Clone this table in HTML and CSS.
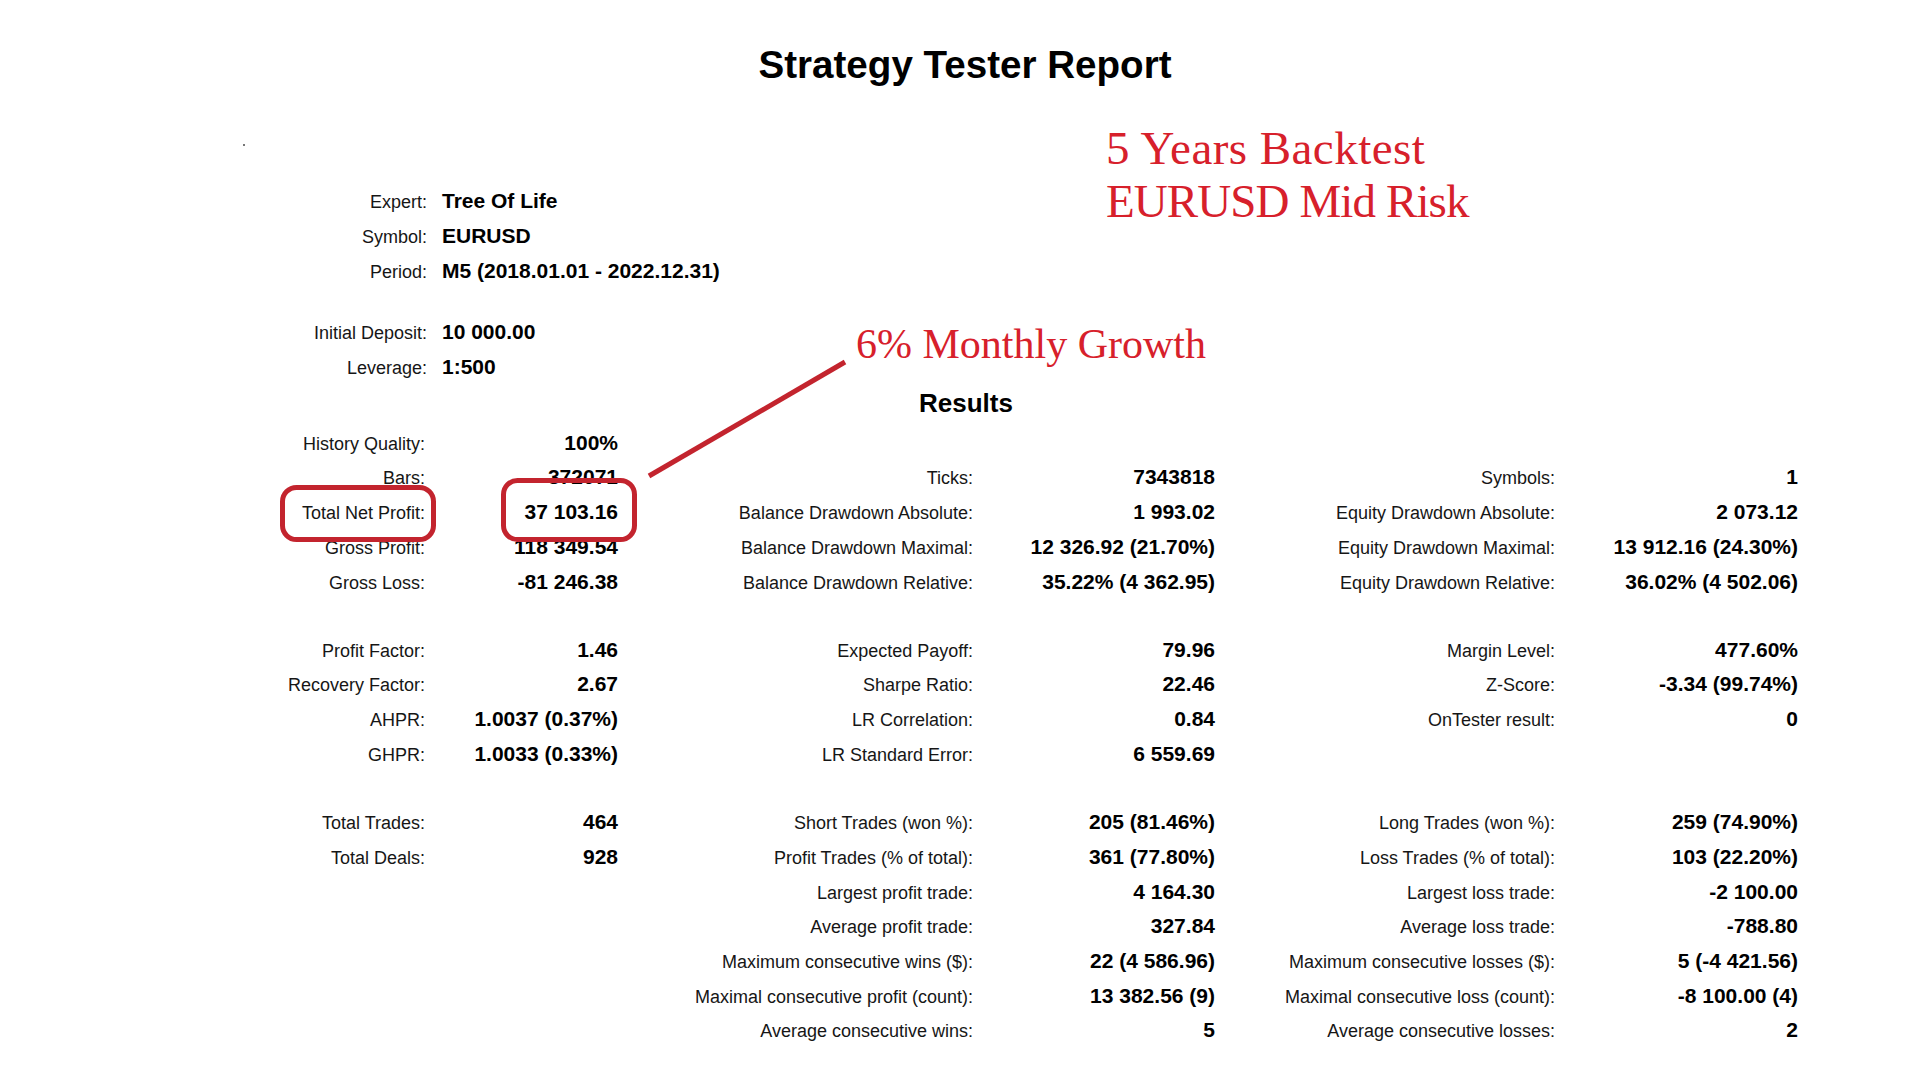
FILE: index.html
```html
<!DOCTYPE html>
<html lang="en">
<head>
<meta charset="utf-8">
<title>Strategy Tester Report</title>
<link rel="stylesheet" href="styles.css">
</head>
<body>
<div class="page">
  <h1 class="title">Strategy Tester Report</h1>

  <div class="info">
    <div class="lbl">Expert:</div><div class="val">Tree Of Life</div>
    <div class="lbl">Symbol:</div><div class="val">EURUSD</div>
    <div class="lbl">Period:</div><div class="val">M5 (2018.01.01 - 2022.12.31)</div>
  </div>
  <div class="info info-second">
    <div class="lbl">Initial Deposit:</div><div class="val">10 000.00</div>
    <div class="lbl">Leverage:</div><div class="val">1:500</div>
  </div>

  <h2 class="results-h">Results</h2>

  <div class="grid g1">
    <div class="lbl">History Quality:</div><div class="val">100%</div><div></div><div></div><div></div><div></div>
    <div class="lbl">Bars:</div><div class="val">372071</div><div class="lbl">Ticks:</div><div class="val">7343818</div><div class="lbl">Symbols:</div><div class="val">1</div>
    <div class="lbl">Total Net Profit:</div><div class="val">37 103.16</div><div class="lbl">Balance Drawdown Absolute:</div><div class="val">1 993.02</div><div class="lbl">Equity Drawdown Absolute:</div><div class="val">2 073.12</div>
    <div class="lbl">Gross Profit:</div><div class="val">118 349.54</div><div class="lbl">Balance Drawdown Maximal:</div><div class="val">12 326.92 (21.70%)</div><div class="lbl">Equity Drawdown Maximal:</div><div class="val">13 912.16 (24.30%)</div>
    <div class="lbl">Gross Loss:</div><div class="val">-81 246.38</div><div class="lbl">Balance Drawdown Relative:</div><div class="val">35.22% (4 362.95)</div><div class="lbl">Equity Drawdown Relative:</div><div class="val">36.02% (4 502.06)</div>
  </div>

  <div class="grid g2">
    <div class="lbl">Profit Factor:</div><div class="val">1.46</div><div class="lbl">Expected Payoff:</div><div class="val">79.96</div><div class="lbl">Margin Level:</div><div class="val">477.60%</div>
    <div class="lbl">Recovery Factor:</div><div class="val">2.67</div><div class="lbl">Sharpe Ratio:</div><div class="val">22.46</div><div class="lbl">Z-Score:</div><div class="val">-3.34 (99.74%)</div>
    <div class="lbl">AHPR:</div><div class="val">1.0037 (0.37%)</div><div class="lbl">LR Correlation:</div><div class="val">0.84</div><div class="lbl">OnTester result:</div><div class="val">0</div>
    <div class="lbl">GHPR:</div><div class="val">1.0033 (0.33%)</div><div class="lbl">LR Standard Error:</div><div class="val">6 559.69</div><div></div><div></div>
  </div>

  <div class="grid g3">
    <div class="lbl">Total Trades:</div><div class="val">464</div><div class="lbl">Short Trades (won %):</div><div class="val">205 (81.46%)</div><div class="lbl">Long Trades (won %):</div><div class="val">259 (74.90%)</div>
    <div class="lbl">Total Deals:</div><div class="val">928</div><div class="lbl">Profit Trades (% of total):</div><div class="val">361 (77.80%)</div><div class="lbl">Loss Trades (% of total):</div><div class="val">103 (22.20%)</div>
    <div></div><div></div><div class="lbl">Largest profit trade:</div><div class="val">4 164.30</div><div class="lbl">Largest loss trade:</div><div class="val">-2 100.00</div>
    <div></div><div></div><div class="lbl">Average profit trade:</div><div class="val">327.84</div><div class="lbl">Average loss trade:</div><div class="val">-788.80</div>
    <div></div><div></div><div class="lbl">Maximum consecutive wins ($):</div><div class="val">22 (4 586.96)</div><div class="lbl">Maximum consecutive losses ($):</div><div class="val">5 (-4 421.56)</div>
    <div></div><div></div><div class="lbl">Maximal consecutive profit (count):</div><div class="val">13 382.56 (9)</div><div class="lbl">Maximal consecutive loss (count):</div><div class="val">-8 100.00 (4)</div>
    <div></div><div></div><div class="lbl">Average consecutive wins:</div><div class="val">5</div><div class="lbl">Average consecutive losses:</div><div class="val">2</div>
  </div>

  <span class="speck"></span>

  <div class="note note-top"><span class="note-line1">5 Years Backtest</span><br><span class="note-line2">EURUSD Mid Risk</span></div>
  <div class="note note-growth">6% Monthly Growth</div>

  <svg class="marks" width="1920" height="1080" viewBox="0 0 1920 1080" aria-hidden="true">
    <line x1="649" y1="476" x2="845" y2="362" class="mark-stroke"/>
    <rect x="282.5" y="487.5" width="151" height="52" rx="14" ry="14" class="mark-stroke"/>
    <rect x="503.5" y="480.5" width="131" height="59" rx="14" ry="14" class="mark-stroke"/>
  </svg>
</div>
</body>
</html>
```

FILE: styles.css
```css
html, body {
  margin: 0;
  padding: 0;
  background: #ffffff;
}

.page {
  position: relative;
  width: 1920px;
  height: 1080px;
  overflow: hidden;
  background: #ffffff;
  color: #000000;
  font-family: "Liberation Sans", Arial, sans-serif;
}

.title {
  margin: 0;
  padding: 43px 0 0 10px;
  text-align: center;
  font-size: 38.6px;
  line-height: 44px;
  font-weight: 700;
}

.info {
  display: grid;
  grid-template-columns: 227px auto;
  column-gap: 15px;
  grid-auto-rows: 35px;
  align-items: baseline;
  margin: 96px 0 0 200px;
}

.info-second {
  margin-top: 26px;
}

.results-h {
  margin: 3.5px 0 0 0;
  padding-left: 12px;
  text-align: center;
  font-size: 26px;
  line-height: 30px;
  font-weight: 700;
}

.grid {
  display: grid;
  grid-template-columns: 225px 193px 355px 242px 340px 243px;
  grid-auto-rows: 34.7px;
  align-items: baseline;
  margin-left: 200px;
}

.g1 { margin-top: 7.3px; }
.g2 { margin-top: 33.3px; }
.g3 { margin-top: 34px; }

.lbl {
  font-size: 18px;
  line-height: 35px;
  font-weight: 400;
  color: #161616;
  white-space: nowrap;
  text-align: right;
}

.val {
  font-size: 21px;
  line-height: 35px;
  font-weight: 700;
  color: #000000;
  white-space: nowrap;
  text-align: right;
}

.info .val {
  text-align: left;
}

.speck {
  position: absolute;
  left: 243px;
  top: 144px;
  width: 2px;
  height: 2px;
  background: #777777;
}

.note {
  position: absolute;
  font-family: "Liberation Serif", "Times New Roman", serif;
  color: #d7202b;
  white-space: nowrap;
}

.note-top {
  left: 1106px;
  top: 121.6px;
  font-size: 47px;
  line-height: 53px;
}

.note-line1 {
  letter-spacing: 0.45px;
}

.note-line2 {
  letter-spacing: -0.9px;
}

.note-growth {
  left: 856px;
  top: 320px;
  font-size: 42px;
  line-height: 48px;
}

.marks {
  position: absolute;
  left: 0;
  top: 0;
  pointer-events: none;
}

.mark-stroke {
  fill: none;
  stroke: #c3242e;
  stroke-width: 5;
}
```
